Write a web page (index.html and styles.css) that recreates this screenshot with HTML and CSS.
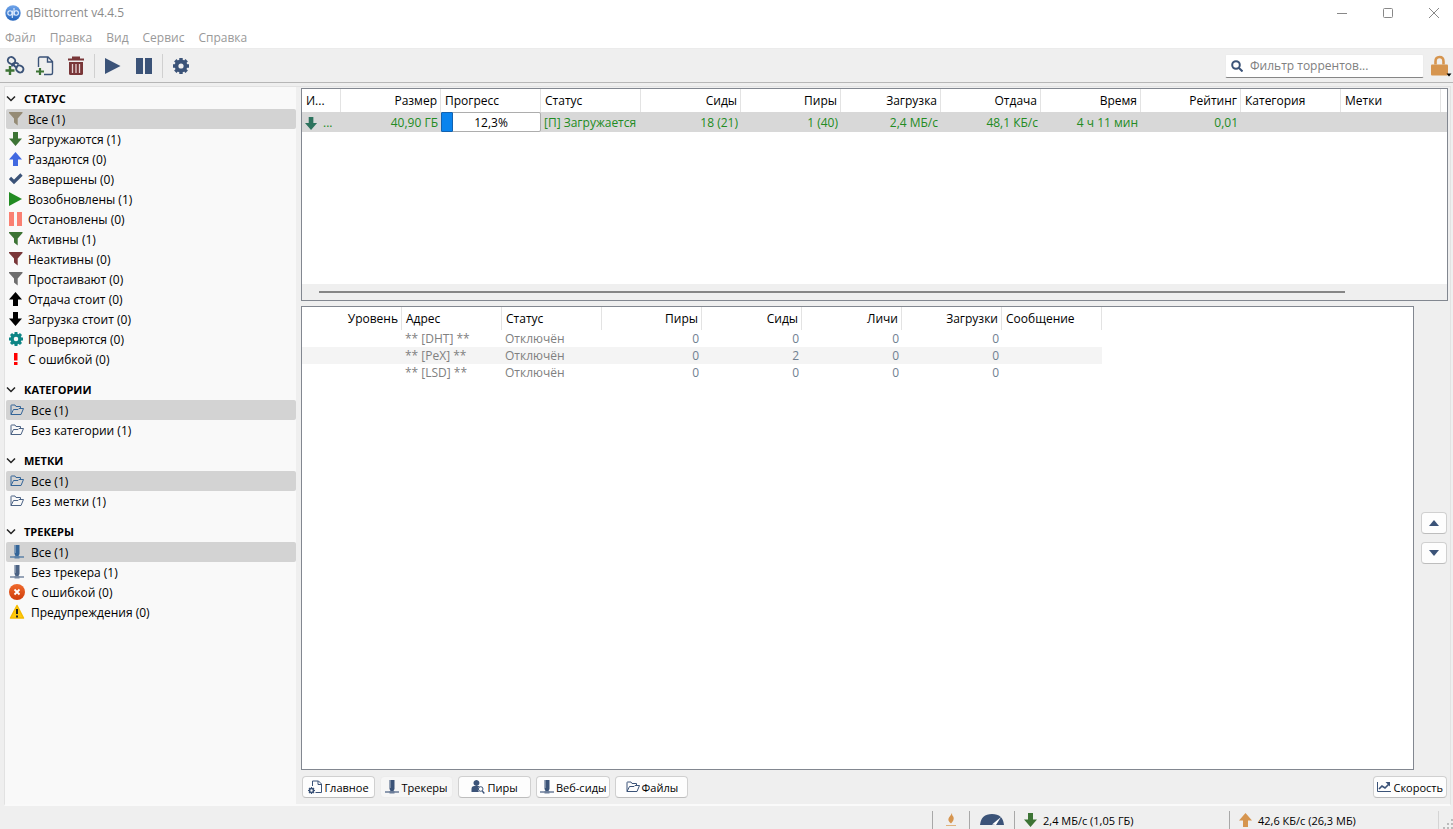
FILE: index.html
```html
<!DOCTYPE html>
<html lang="ru">
<head>
<meta charset="utf-8">
<title>qBittorrent v4.4.5</title>
<link rel="stylesheet" href="styles.css">
</head>
<body>
<svg class="sprite" aria-hidden="true">
  <defs>
    <linearGradient id="logo-fill" x1="0" y1="0" x2="0" y2="1"><stop offset="0" stop-color="#6fa4ea"/><stop offset="1" stop-color="#2465bd"/></linearGradient>
    <linearGradient id="error-fill" x1="0" y1="0" x2="0" y2="1"><stop offset="0" stop-color="#f06a2c"/><stop offset="1" stop-color="#cf3d0c"/></linearGradient>
  </defs>
  <symbol id="funnel" viewBox="0 0 14 14"><path fill="currentColor" d="M0 0h13.500v1L8.700 6.500V13.500L5 10.500V6.500L0 1z"/></symbol>
  <symbol id="down" viewBox="0 0 14 14"><path fill="currentColor" d="M4 0h5v6.500h4L6.500 14 0 6.500h4z"/></symbol>
  <symbol id="up" viewBox="0 0 14 14"><path fill="currentColor" d="M4 14h5V7.500h4L6.500 0 0 7.500h4z"/></symbol>
  <symbol id="check" viewBox="0 0 14 14"><path fill="none" stroke="currentColor" stroke-width="3.200" d="M1 6l4 4 7.500-7.500"/></symbol>
  <symbol id="play" viewBox="0 0 14 14"><path fill="currentColor" d="M0 0l13 7L0 14z"/></symbol>
  <symbol id="pause" viewBox="0 0 14 14"><path fill="currentColor" d="M0 0h5v14H0zM8 0h5v14H8z"/></symbol>
  <symbol id="gear" viewBox="0 0 16 16"><circle cx="8" cy="8" r="4.500" fill="none" stroke="currentColor" stroke-width="3.800"/><path stroke="currentColor" stroke-width="3.400" d="M8 0v2.500M8 13.500V16M0 8h2.500M13.500 8H16M2.300 2.300l1.800 1.800M11.900 11.900l1.800 1.800M2.300 13.700l1.800-1.800M11.900 4.100l1.800-1.800"/></symbol>
  <symbol id="bang" viewBox="0 0 14 14"><path fill="currentColor" d="M5 1h3.500v7.500H5zM5 10h3.500v3H5z"/></symbol>
  <symbol id="folder" viewBox="0 0 14 14"><path fill="none" stroke="currentColor" d="M1 11.500V2.500Q1 2 1.500 2H5l1 1.500h4.500V6M1 11.500L3.500 6.500H8l1-1h4.500l-2.500 6z"/></symbol>
  <symbol id="server" viewBox="0 0 14 14"><path fill="currentColor" d="M4.500 0h5v9L8.500 11h-3l-1-2z"/><path fill="#fff" opacity=".3" d="M5 0h1v8H5z"/><path fill="currentColor" opacity=".75" d="M0 11.300h14v1.500H0zM4.500 11h5v2.500h-5z"/></symbol>
  <symbol id="chevron" viewBox="0 0 10 10"><path fill="none" stroke="#222" stroke-width="1.500" d="M1 2.500l4 4 4-4"/></symbol>
  <symbol id="caret-up" viewBox="0 0 12 6"><path fill="currentColor" d="M1 6h10L6 0z"/></symbol>
  <symbol id="caret-down" viewBox="0 0 12 6"><path fill="currentColor" d="M1 0h10L6 6z"/></symbol>
</svg>

<header class="titlebar">
  <svg class="logo" viewBox="0 0 16 16"><circle cx="8" cy="8" r="7.700" fill="url(#logo-fill)"/><g fill="none" stroke="#e4efff" stroke-width="1.100"><circle cx="5" cy="8" r="2.200"/><path d="M7.300 5.500V13M9 3v7.500"/><circle cx="11.200" cy="8" r="2.200"/></g></svg>
  <h1 class="title">qBittorrent v4.4.5</h1>
  <div class="window-controls">
    <button type="button" aria-label="Свернуть"><svg viewBox="0 0 10 10"><path d="M0 5.500h10"/></svg></button>
    <button type="button" aria-label="Развернуть"><svg viewBox="0 0 10 10"><rect x=".5" y=".5" width="9" height="9" rx="1"/></svg></button>
    <button type="button" aria-label="Закрыть"><svg viewBox="0 0 10 10"><path d="M0 0l10 10M10 0L0 10"/></svg></button>
  </div>
</header>

<nav class="menubar">
  <button type="button">Файл</button><button type="button">Правка</button><button type="button">Вид</button><button type="button">Сервис</button><button type="button">Справка</button>
</nav>

<div class="toolbar">
  <button type="button" class="tool" aria-label="Добавить ссылку"><svg class="icon-tool" viewBox="0 0 20 20"><g fill="none" stroke="#3b5378" stroke-width="1.900"><rect x="2.800" y="1.300" width="7.500" height="6.500" rx="3.200" transform="rotate(35 6.500 4.500)"/><rect x="11" y="9.800" width="7.500" height="6.500" rx="3.200" transform="rotate(35 15 13)"/><path d="M7 10.500q0-3 3-3.500 2.500-.5 3.500 1.500M8.500 6.500q0 4.500 4 5"/></g><path d="M5 10v9M.5 14.500h9" stroke="#3d7435" stroke-width="2.400"/></svg></button>
  <button type="button" class="tool" aria-label="Добавить торрент-файл"><svg class="icon-tool" viewBox="0 0 20 20"><path d="M3.500 11V2.500q0-1.500 1.500-1.500h8l4.500 4.500V17q0 1.500-1.500 1.500H9M12.500 1v5h5" fill="none" stroke="#3b5378" stroke-width="1.400"/><path d="M5 12v7M1 15.500h8" stroke="#3d7435" stroke-width="2.200"/></svg></button>
  <button type="button" class="tool" aria-label="Удалить"><svg class="icon-tool" viewBox="0 0 20 20"><path d="M2 3.500h16M7 3V1.500h6V3" fill="none" stroke="#793638" stroke-width="2"/><path d="M3 6h14v11.500q0 1.500-1.500 1.500h-11Q3 19 3 17.500z" fill="#793638"/><path d="M6.500 8v9M10 8v9M13.500 8v9" stroke="#e6d3d3" stroke-width="1.300"/></svg></button>
  <span class="tool-divider"></span>
  <button type="button" class="tool navy" aria-label="Возобновить"><svg class="icon-run" viewBox="0 0 16 16"><path fill="currentColor" d="M0 0l15.500 8L0 16z"/></svg></button>
  <button type="button" class="tool navy" aria-label="Остановить"><svg class="icon-hold" viewBox="0 0 16 16"><path fill="currentColor" d="M0 0h7v16H0zM9 0h7v16H9z"/></svg></button>
  <span class="tool-divider"></span>
  <button type="button" class="tool navy" aria-label="Настройки"><svg class="icon-hold"><use href="#gear"/></svg></button>
  <label class="search"><svg class="search-icon" viewBox="0 0 12 12"><circle cx="5" cy="5" r="3.800"/><path d="M8 8l3.500 3.500"/></svg><input type="text" placeholder="Фильтр торрентов..." aria-label="Фильтр торрентов"></label>
  <button type="button" class="lock" aria-label="Блокировка"><svg viewBox="0 0 22 22"><path d="M5.500 9.500V6.500q0-4.500 4-4.500t4 4.500v3" fill="none" stroke="#d6954f" stroke-width="2.600"/><rect x="1" y="9.500" width="17" height="11" rx="1" fill="#d6954f"/><path d="M16.500 18.500h5L19 21.500z" fill="#000"/></svg></button>
</div>

<main class="workspace">
  <aside class="sidebar">
    <section class="group">
      <h2><svg><use href="#chevron"/></svg>СТАТУС</h2>
      <ul>
        <li class="selected khaki"><svg><use href="#funnel"/></svg><span>Все (1)</span></li>
        <li class="green"><svg><use href="#down"/></svg><span>Загружаются (1)</span></li>
        <li class="blue"><svg><use href="#up"/></svg><span>Раздаются (0)</span></li>
        <li class="navy"><svg><use href="#check"/></svg><span>Завершены (0)</span></li>
        <li class="lime"><svg><use href="#play"/></svg><span>Возобновлены (1)</span></li>
        <li class="salmon"><svg><use href="#pause"/></svg><span>Остановлены (0)</span></li>
        <li class="green"><svg><use href="#funnel"/></svg><span>Активны (1)</span></li>
        <li class="maroon"><svg><use href="#funnel"/></svg><span>Неактивны (0)</span></li>
        <li class="gray"><svg><use href="#funnel"/></svg><span>Простаивают (0)</span></li>
        <li class="black"><svg><use href="#up"/></svg><span>Отдача стоит (0)</span></li>
        <li class="black"><svg><use href="#down"/></svg><span>Загрузка стоит (0)</span></li>
        <li class="teal"><svg><use href="#gear"/></svg><span>Проверяются (0)</span></li>
        <li class="red"><svg><use href="#bang"/></svg><span>С ошибкой (0)</span></li>
      </ul>
    </section>
    <section class="group wide">
      <h2><svg><use href="#chevron"/></svg>КАТЕГОРИИ</h2>
      <ul>
        <li class="selected steel"><svg><use href="#folder"/></svg><span>Все (1)</span></li>
        <li class="slate"><svg><use href="#folder"/></svg><span>Без категории (1)</span></li>
      </ul>
    </section>
    <section class="group wide">
      <h2><svg><use href="#chevron"/></svg>МЕТКИ</h2>
      <ul>
        <li class="selected steel"><svg><use href="#folder"/></svg><span>Все (1)</span></li>
        <li class="slate"><svg><use href="#folder"/></svg><span>Без метки (1)</span></li>
      </ul>
    </section>
    <section class="group wide">
      <h2><svg><use href="#chevron"/></svg>ТРЕКЕРЫ</h2>
      <ul>
        <li class="selected steel"><svg><use href="#server"/></svg><span>Все (1)</span></li>
        <li class="slate"><svg><use href="#server"/></svg><span>Без трекера (1)</span></li>
        <li><svg class="badge" viewBox="0 0 16 16"><circle cx="8" cy="8" r="8" fill="url(#error-fill)"/><path d="M5.500 5.500l5 5M10.500 5.500l-5 5" stroke="#fff" stroke-width="1.800"/></svg><span>С ошибкой (0)</span></li>
        <li><svg class="badge" viewBox="0 0 16 16"><path d="M8 1.500L14.500 14h-13z" fill="#ffc90e" stroke="#f5bb00" stroke-width="1.500" stroke-linejoin="round"/><path d="M8 5v5M8 11.500v2" stroke="#222" stroke-width="2"/></svg><span>Предупреждения (0)</span></li>
      </ul>
    </section>
  </aside>

  <div class="content">
    <section class="panel torrents">
      <table>
        <colgroup><col class="c-name"><col><col><col><col><col><col><col><col><col><col><col><col class="c-rest"></colgroup>
        <thead><tr><th>И...</th><th class="num">Размер</th><th>Прогресс</th><th>Статус</th><th class="num">Сиды</th><th class="num">Пиры</th><th class="num">Загрузка</th><th class="num">Отдача</th><th class="num">Время</th><th class="num">Рейтинг</th><th>Категория</th><th>Метки</th><td></td></tr></thead>
        <tbody><tr><td><span class="name"><svg><use href="#down"/></svg>...</span></td><td class="num">40,90 ГБ</td><td class="progress-cell"><div class="progress"><span class="progress-fill"></span><span class="progress-text">12,3%</span></div></td><td>[П] Загружается</td><td class="num">18 (21)</td><td class="num">1 (40)</td><td class="num">2,4 МБ/с</td><td class="num">48,1 КБ/с</td><td class="num">4 ч 11 мин</td><td class="num">0,01</td><td></td><td></td><td></td></tr></tbody>
      </table>
      <div class="scrollbar"><div class="thumb"></div></div>
    </section>

    <div class="details">
      <section class="panel trackers">
        <table>
          <colgroup><col><col><col><col><col><col><col><col></colgroup>
          <thead><tr><th class="num">Уровень</th><th>Адрес</th><th>Статус</th><th class="num">Пиры</th><th class="num">Сиды</th><th class="num">Личи</th><th class="num">Загрузки</th><th>Сообщение</th></tr></thead>
          <tbody>
            <tr><td></td><td>** [DHT] **</td><td>Отключён</td><td class="num">0</td><td class="num">0</td><td class="num">0</td><td class="num">0</td><td></td></tr>
            <tr><td></td><td>** [PeX] **</td><td>Отключён</td><td class="num">0</td><td class="num">2</td><td class="num">0</td><td class="num">0</td><td></td></tr>
            <tr><td></td><td>** [LSD] **</td><td>Отключён</td><td class="num">0</td><td class="num">0</td><td class="num">0</td><td class="num">0</td><td></td></tr>
          </tbody>
        </table>
      </section>
      <div class="movers">
        <button type="button" class="btn navy" aria-label="Вверх"><svg><use href="#caret-up"/></svg></button>
        <button type="button" class="btn navy" aria-label="Вниз"><svg><use href="#caret-down"/></svg></button>
      </div>
    </div>

    <div class="tabs">
      <button type="button" class="btn tab navy"><svg viewBox="0 0 14 14"><path d="M4.500 6V1h6l3 3v8.500h-6M10 1v3.500h3.500" fill="none" stroke="currentColor"/><circle cx="3.500" cy="10.500" r="2" fill="none" stroke="currentColor" stroke-width="1.600"/><path d="M3.500 7v1.500M3.500 12.500V14M0 10.500h1.500M5.500 10.500H7M1 8l1 1M5 12l1 1M6 8L5 9M1 13l1-1" stroke="currentColor" stroke-width="1.200"/></svg><span>Главное</span></button>
      <button type="button" class="btn tab navy active"><svg><use href="#server"/></svg><span>Трекеры</span></button>
      <button type="button" class="btn tab navy"><svg viewBox="0 0 14 14"><path fill="currentColor" d="M5.500 0a3 3 0 1 1-.1 0zM.5 12V9q0-3 3-3h5q-3 3-.5 6z"/><circle cx="9.700" cy="9" r="2.300" fill="#fff" stroke="currentColor"/><path stroke="currentColor" stroke-width="1.300" d="M11.300 11l2 2.500"/></svg><span>Пиры</span></button>
      <button type="button" class="btn tab navy"><svg><use href="#server"/></svg><span>Веб-сиды</span></button>
      <button type="button" class="btn tab navy"><svg><use href="#folder"/></svg><span>Файлы</span></button>
      <button type="button" class="btn tab navy speed"><svg viewBox="0 0 14 14"><path fill="none" stroke="currentColor" d="M.5 2v9.500H14"/><path fill="none" stroke="currentColor" stroke-width="1.700" d="M2 9l3-3 3 2 4-4"/><path fill="currentColor" d="M8.500 2H13v4.500z"/></svg><span>Скорость</span></button>
    </div>
  </div>
</main>

<footer class="statusbar">
  <div class="cell flame"><svg viewBox="0 0 12 14"><path fill="#d6954f" d="M7 0q-.5 2 1.500 4 1 3-2.500 6.500-4-3-2-6Q6 2 7 0z"/><path stroke="#dfb27e" d="M1 12.500h10"/></svg></div>
  <div class="cell gauge"><svg viewBox="0 0 24 12"><path fill="#3b5378" d="M0 11Q1 0 12 0T24 11z"/><path fill="#fff" d="M12 10.500L21 3l-5 8z"/></svg></div>
  <div class="cell rate green"><svg><use href="#down"/></svg><span>2,4 МБ/с (1,05 ГБ)</span></div>
  <div class="cell rate amber"><svg><use href="#up"/></svg><span>42,6 КБ/с (26,3 МБ)</span></div>
  <div class="cell grip"><svg viewBox="0 0 10 10"><path fill="#bbb" d="M8 0h2v2H8zM4 4h2v2H4zM8 4h2v2H8zM0 8h2v2H0zM4 8h2v2H4zM8 8h2v2H8z"/></svg></div>
</footer>
</body>
</html>
```
FILE: styles.css
```css
* { box-sizing: border-box; }
body { margin: 0; height: 100vh; display: flex; flex-direction: column; background: #efefef; color: #000; font: 12px/16px "Open Sans", "Noto Sans", sans-serif; overflow: hidden; }
button, input { font: inherit; color: inherit; }
button { border: 0; padding: 0; background: none; }
svg { display: block; flex: none; }
ul { list-style: none; margin: 0; padding: 0; }
.sprite { position: absolute; width: 0; height: 0; }

.khaki { color: #958b75; } .green { color: #3d7435; } .blue { color: #4169e1; } .navy { color: #3b5378; }
.lime { color: #228b22; } .salmon { color: #fa8072; } .maroon { color: #793638; } .gray { color: #6e6e6e; }
.black { color: #000; } .teal { color: #0d8585; } .red { color: #f00; } .steel { color: #346598; }
.slate { color: #4c6384; } .amber { color: #d6954f; }

.titlebar { display: flex; align-items: center; height: 25px; padding: 0 14px 0 5px; background: #fff; flex: none; }
.logo { width: 16px; height: 16px; }
.title { margin: 0 0 0 5px; font-size: 12px; font-weight: 400; color: #8b8b8b; }
.window-controls { margin-left: auto; display: flex; gap: 36px; }
.window-controls svg { width: 10px; height: 10px; fill: none; stroke: #888; overflow: visible; }

.menubar { display: flex; gap: 14px; height: 24px; padding: 3px 5px 0; background: #fff; color: #999; border-bottom: 1px solid #ebebeb; flex: none; align-items: center; }

.toolbar { display: flex; align-items: center; height: 34px; border-bottom: 1px solid #b6b6b6; flex: none; }
.tool { width: 31px; height: 30px; display: grid; place-items: center; }
.toolbar > .tool:first-child { width: 29px; }
.icon-tool { width: 20px; height: 20px; }
.icon-run { width: 16px; height: 16px; }
.icon-hold { width: 16px; height: 16px; }
.tool-divider { width: 1px; height: 24px; margin: 0 2px 0 3px; background: #d0d0d0; }
.search { margin-left: auto; width: 199px; height: 24px; display: flex; align-items: center; gap: 7px; padding-left: 5px; background: #fff; border: 1px solid #ececec; border-bottom-color: #868686; border-radius: 2px; }
.search-icon { width: 12px; height: 12px; fill: none; stroke: #3b5378; stroke-width: 2; }
.search input { flex: 1; min-width: 0; border: 0; padding: 0; outline: 0; background: none; }
.search input::placeholder { color: #808080; opacity: 1; }
.lock { margin: 0 1px 0 6px; }
.lock svg { width: 22px; height: 22px; }

.workspace { flex: 1; min-height: 0; display: flex; margin: 3px 2px 0 4px; border: 1px solid #e2e2e2; border-bottom: 2px solid #fafafa; }
.sidebar { flex: none; width: 291px; padding: 2px 0 0 1px; background: #f9f9f9; display: flex; flex-direction: column; gap: 11px; }
.group h2 { margin: 0; height: 20px; display: flex; align-items: center; gap: 8px; font-size: 11px; font-weight: 700; }
.group h2 svg { width: 10px; height: 10px; }
.group li { display: flex; align-items: center; gap: 5px; height: 20px; padding-left: 3px; border-radius: 2px; }
.group li span { color: #000; padding-top: 2px; }
.group li svg { width: 14px; height: 14px; }
.wide li { gap: 7px; padding-left: 4px; }
.wide li .badge { width: 16px; height: 16px; margin: 0 -1px; }
.selected { background: #d3d3d3; }

.content { flex: 1; min-width: 0; display: flex; flex-direction: column; padding: 1px 2px 6px 5px; }
.panel { background: #fff; border: 1px solid #828790; }
table { border-collapse: separate; border-spacing: 0; table-layout: fixed; }
col { width: 100px; }
th { height: 23px; padding: 0 4px; text-align: left; font-weight: 400; border-right: 1px solid #e3e3e3; }
td { padding: 0 3px; white-space: nowrap; }
.num { text-align: right; padding-right: 3px; }

.torrents { flex: none; height: 213px; display: flex; flex-direction: column; }
.torrents table { width: 100%; }
.c-name { width: 39px; }
.c-rest { width: auto; }
.torrents tbody tr { height: 20px; background: #d8d8d8; color: #228b22; }
.torrents tbody td { padding-top: 2px; }
.name { display: flex; align-items: center; gap: 5px; }
.name svg { width: 13px; height: 13px; color: #2d735e; }
.torrents tbody .progress-cell { padding: 0; }
.progress { display: flex; height: 20px; background: #fff; border: 1px solid #adadad; border-radius: 2px; color: #000; position: relative; }
.progress-fill { width: 12%; background: #0a84ee; border: 1px solid #1262b0; border-radius: 1px; margin: -1px 0 -1px -1px; }
.progress-text { position: absolute; inset: 0; text-align: center; line-height: 19px; }
.scrollbar { margin-top: auto; height: 16px; display: flex; align-items: center; background: #efefef; padding: 0 102px 0 17px; }
.thumb { flex: 1; height: 2px; background: #868686; }

.details { flex: 1; min-height: 0; display: flex; margin-top: 5px; }
.trackers { flex: 1; min-width: 0; }
.trackers table { width: 800px; }
.trackers tbody tr { height: 17px; color: #808080; }
.trackers tbody tr:nth-child(even) { background: #f4f4f4; }
.trackers tbody .num { color: #708090; }
.movers { flex: none; width: 34px; display: flex; flex-direction: column; justify-content: center; align-items: flex-end; gap: 8px; padding-right: 1px; }
.btn { background: #fdfdfd; border: 1px solid #d0d0d0; border-bottom-color: #bdbdbd; border-radius: 4px; }
.movers .btn { width: 26px; height: 22px; display: grid; place-items: center; }
.movers svg { width: 12px; height: 6px; }

.tabs { display: flex; gap: 5px; margin-top: 6px; padding: 0 1px; flex: none; }
.tab { min-width: 73px; height: 22px; display: flex; align-items: center; justify-content: center; gap: 2px; padding: 0 3px; font-size: 11px; }
.tab span { color: #000; padding-top: 1px; }
.tab svg { width: 14px; height: 14px; }
.tab.active { background: #f6f6f6; border-color: #ececec; }
.speed { margin-left: auto; }

.statusbar { flex: none; height: 23px; padding-top: 5px; display: flex; justify-content: flex-end; font-size: 11px; }
.cell { display: flex; align-items: center; border-left: 1px solid #a8a8a8; height: 18px; }
.cell span { color: #000; padding-top: 1px; }
.flame { width: 37px; justify-content: center; }
.flame svg { width: 12px; height: 14px; }
.gauge { width: 45px; justify-content: center; }
.gauge svg { width: 24px; height: 12px; }
.rate { width: 215px; padding-left: 9px; gap: 5px; }
.rate svg { width: 14px; height: 14px; }
.rate.amber { width: 209px; }
.grip { width: 15px; justify-content: flex-end; align-items: flex-end; border-left-color: #d4d4d4; }
.grip svg { width: 10px; height: 10px; }
```
